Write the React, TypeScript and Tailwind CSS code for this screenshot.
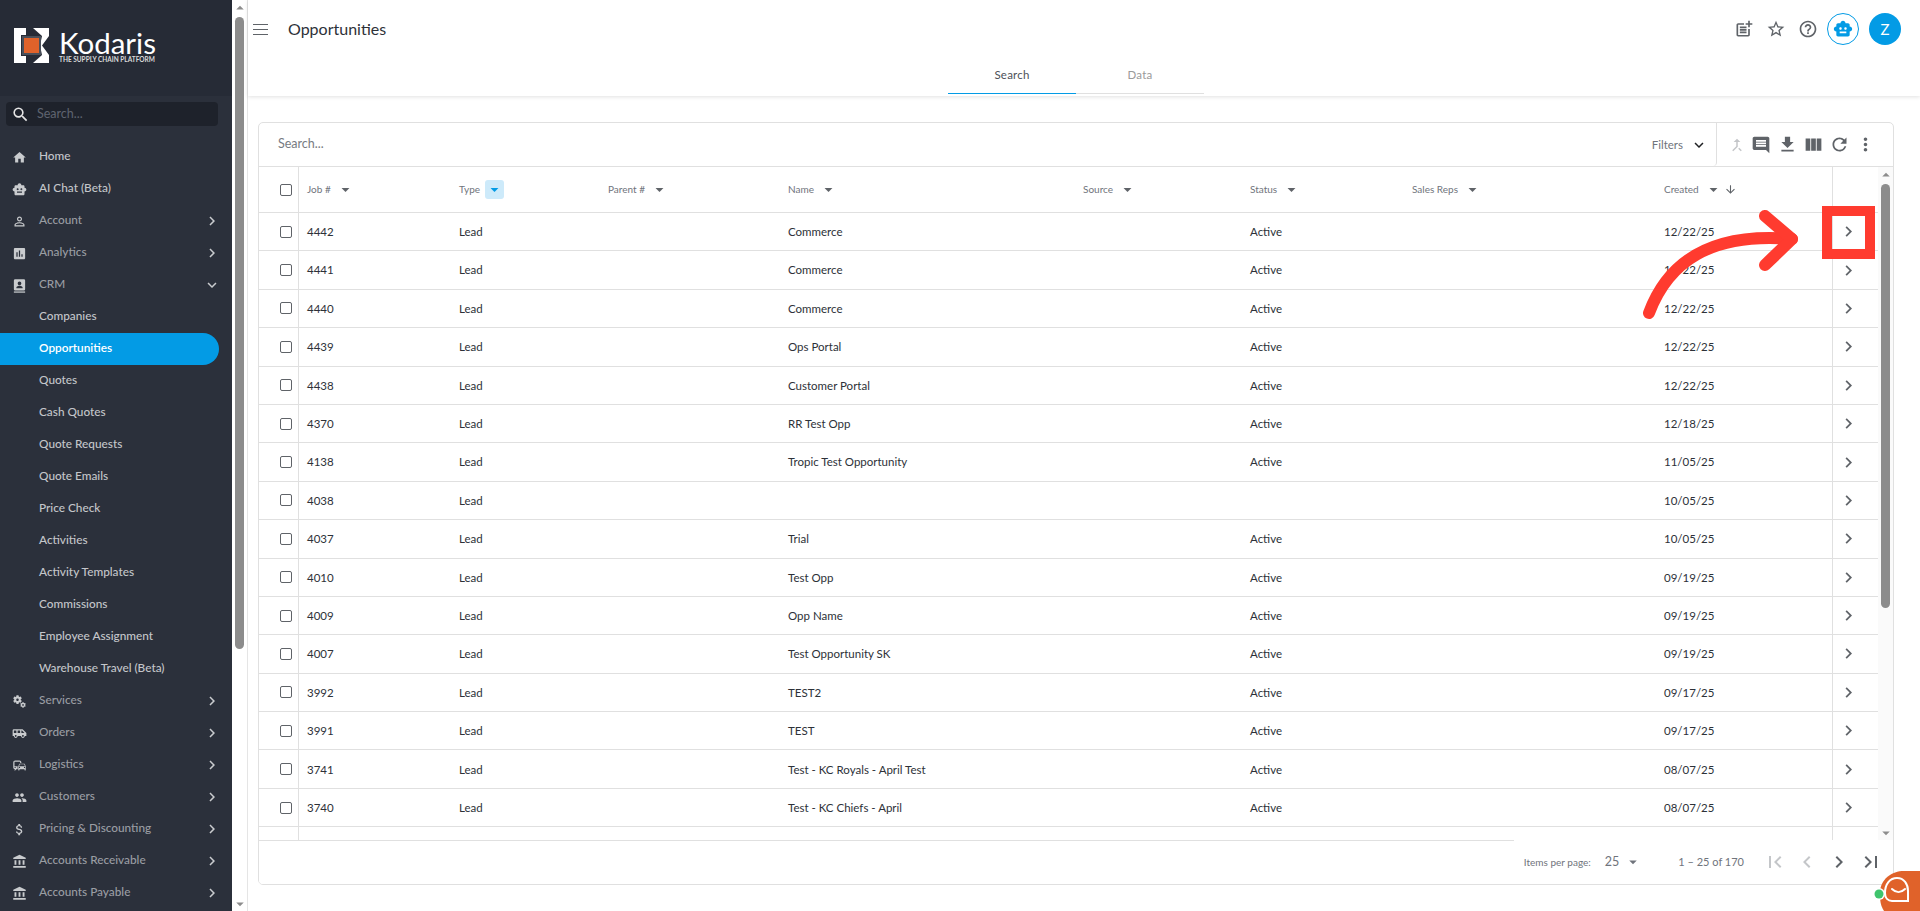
import React from "react";
import {
  MdHome, MdSmartToy, MdPermIdentity, MdAssessment, MdMiscellaneousServices, MdAirportShuttle,
  MdCommute, MdPeople, MdAttachMoney, MdAccountBalance, MdChevronRight, MdExpandMore, MdSearch, MdOutlinePostAdd,
  MdStarBorder, MdHelpOutline, MdCallMerge, MdInsertComment, MdFileDownload, MdViewColumn, MdRefresh, MdMoreVert,
  MdArrowDownward, MdFirstPage, MdChevronLeft, MdLastPage, MdArrowDropDown, MdArrowDropUp,
} from "react-icons/md";

const font = "[font-family:Lato,'Open_Sans',sans-serif]";

function CrmIcon({ className }: { className?: string }) {
  return (
    <svg className={className} viewBox="0 0 24 24" width="1em" height="1em" fill="currentColor">
      <path fillRule="evenodd" d="M5 2h14a2 2 0 0 1 2 2v14a2 2 0 0 1-2 2H5a2 2 0 0 1-2-2V4a2 2 0 0 1 2-2Zm7 3.5a3 3 0 1 0 0 6 3 3 0 0 0 0-6ZM7 16.5h10v-1.2c0-1.9-3.3-2.8-5-2.8s-5 .9-5 2.8v1.2Z" />
      <rect x="3" y="21.5" width="18" height="2" />
    </svg>
  );
}

type NavItem = { label: string; Icon?: React.ComponentType<{ className?: string }>; chevron?: "right" | "down"; sub?: boolean; active?: boolean };

const nav: NavItem[] = [
  { label: "Home", Icon: MdHome },
  { label: "AI Chat (Beta)", Icon: MdSmartToy },
  { label: "Account", Icon: MdPermIdentity, chevron: "right" },
  { label: "Analytics", Icon: MdAssessment, chevron: "right" },
  { label: "CRM", Icon: CrmIcon, chevron: "down" },
  { label: "Companies", sub: true },
  { label: "Opportunities", sub: true, active: true },
  { label: "Quotes", sub: true },
  { label: "Cash Quotes", sub: true },
  { label: "Quote Requests", sub: true },
  { label: "Quote Emails", sub: true },
  { label: "Price Check", sub: true },
  { label: "Activities", sub: true },
  { label: "Activity Templates", sub: true },
  { label: "Commissions", sub: true },
  { label: "Employee Assignment", sub: true },
  { label: "Warehouse Travel (Beta)", sub: true },
  { label: "Services", Icon: MdMiscellaneousServices, chevron: "right" },
  { label: "Orders", Icon: MdAirportShuttle, chevron: "right" },
  { label: "Logistics", Icon: MdCommute, chevron: "right" },
  { label: "Customers", Icon: MdPeople, chevron: "right" },
  { label: "Pricing & Discounting", Icon: MdAttachMoney, chevron: "right" },
  { label: "Accounts Receivable", Icon: MdAccountBalance, chevron: "right" },
  { label: "Accounts Payable", Icon: MdAccountBalance, chevron: "right" },
];

const rows: [string, string, string, string][] = [
  ["4442", "Commerce", "Active", "12/22/25"],
  ["4441", "Commerce", "Active", "12/22/25"],
  ["4440", "Commerce", "Active", "12/22/25"],
  ["4439", "Ops Portal", "Active", "12/22/25"],
  ["4438", "Customer Portal", "Active", "12/22/25"],
  ["4370", "RR Test Opp", "Active", "12/18/25"],
  ["4138", "Tropic Test Opportunity", "Active", "11/05/25"],
  ["4038", "", "", "10/05/25"],
  ["4037", "Trial", "Active", "10/05/25"],
  ["4010", "Test Opp", "Active", "09/19/25"],
  ["4009", "Opp Name", "Active", "09/19/25"],
  ["4007", "Test Opportunity SK", "Active", "09/19/25"],
  ["3992", "TEST2", "Active", "09/17/25"],
  ["3991", "TEST", "Active", "09/17/25"],
  ["3741", "Test - KC Royals - April Test", "Active", "08/07/25"],
  ["3740", "Test - KC Chiefs - April", "Active", "08/07/25"],
];

const grid = "grid grid-cols-[40px_152px_149px_180px_295px_167px_162px_252px_176px_46px]";

function Check() {
  return <span className="block w-[10px] h-[10px] box-content border-[1.5px] border-[#5f6368] rounded-[2px]" />;
}

function Logo() {
  return (
    <div className="flex items-start gap-[10px]">
      <svg width="35" height="35" viewBox="0 0 35 35" className="shrink-0">
        <path fill="#fff" d="M0 0h12v7H7v21h5v7H0z" />
        <path fill="#fff" d="M19 0h16v8l-7 9.5 7 9.500v8H19l9-8-2-9.500 2-9.500z" />
        <path fill="#4a4f59" d="M8 8h19v19H8z" />
        <rect x="10" y="10" width="15" height="15" fill="#e0622a" />
      </svg>
      <div className="flex flex-col items-start mt-[2px]">
        <span className={`${font} text-[29.5px] leading-[26px] text-white font-normal`}>Kodaris</span>
        <span className={`${font} text-[6.5px] leading-[7px] font-bold text-[#d9d9d9] whitespace-nowrap`}>THE SUPPLY CHAIN PLATFORM</span>
      </div>
    </div>
  );
}

function Sidebar() {
  return (
    <aside className="w-[232px] h-full shrink-0 bg-[#2b303b] flex flex-col overflow-hidden">
      <div className="h-[96px] bg-[#262b36] shrink-0 pl-[14px] pt-[28px]">
        <Logo />
      </div>
      <div className="h-[45px] shrink-0 px-[6px] pt-[6px]">
        <div className="h-[24px] w-[212px] bg-[#1e222b] rounded-[4px] flex items-center pl-[5px] gap-[7px]">
          <MdSearch className="text-[19px] text-[#e6e6e6]" />
          <span className={`${font} text-[12.5px] pt-[1px] text-[#5e6470]`}>Search...</span>
        </div>
      </div>
      <nav className="flex flex-col">
        {nav.map((n) => (
          <div
            key={n.label}
            className={`h-8 w-[219px] shrink-0 flex items-center pl-[12px] rounded-r-full ${font} text-[11.8px] font-medium ${n.active ? "bg-[#039be5] text-white font-semibold" : n.sub ? "text-[#c4c6ca]" : n.chevron ? "text-[#9a9da3]" : "text-[#c4c6ca]"}`}
          >
            <span className="w-[27px] shrink-0 flex items-center">
              {n.Icon && <n.Icon className="text-[15px] text-[#c9cbce]" />}
            </span>
            <span className="flex-1 whitespace-nowrap pb-[2px]">{n.label}</span>
            {n.chevron === "right" && <MdChevronRight className="text-[18px] text-[#c9cbce] -mr-[2px]" />}
            {n.chevron === "down" && <MdExpandMore className="text-[18px] text-[#c9cbce] -mr-[2px]" />}
          </div>
        ))}
      </nav>
    </aside>
  );
}

function Scrollbar({ thumb, className }: { thumb: string; className: string }) {
  return (
    <div className={`flex flex-col items-center ${className}`}>
      <MdArrowDropUp className="text-[18px] text-[#8c8c8c] shrink-0 -my-[2px]" />
      <div className="flex-1 w-full px-[3px] pt-[2px]">
        <div className={`${thumb} w-full bg-[#8c8c8c] rounded-full`} />
      </div>
      <MdArrowDropDown className="text-[18px] text-[#8c8c8c] shrink-0 -my-[2px]" />
    </div>
  );
}

function Th({ label, filtered }: { label: string; filtered?: boolean }) {
  return (
    <div className="h-full flex items-center pl-2 text-[10px] text-[#70747c]">
      <span>{label}</span>
      {filtered ? (
        <span className="ml-[5px] w-[19px] h-[19px] rounded-[3px] bg-[#cdeafa] flex items-center justify-center">
          <MdArrowDropDown className="text-[19px] text-[#039be5]" />
        </span>
      ) : (
        <MdArrowDropDown className="ml-[5px] text-[19px] text-[#5f6368]" />
      )}
      {label === "Created" && <MdArrowDownward className="ml-[1px] text-[13px] text-[#5f6368]" />}
    </div>
  );
}

function TopBar() {
  return (
    <header className="h-[96px] shrink-0 bg-white shadow-[0_1px_4px_rgba(0,0,0,0.12)] relative z-10">
      <div className="h-[58px] flex items-center pl-[6px] pr-[19px]">
        <svg width="15" height="11" viewBox="0 0 15 11" className="mr-[20px] ml-[-1px] shrink-0">
          <path d="M0 .5h15M0 5.500h15M0 10.500h15" stroke="#5f6368" strokeWidth="1" />
        </svg>
        <h1 className="text-[16px] text-[#2d3138] font-normal">Opportunities</h1>
        <div className="ml-auto flex items-center text-[#5f6368]">
          <MdOutlinePostAdd className="text-[20px] mr-[12px]" />
          <MdStarBorder className="text-[20px] mr-[12px]" />
          <MdHelpOutline className="text-[20px] mr-[9px]" />
          <span className="w-8 h-8 rounded-full border border-[#039be5] flex items-center justify-center mr-[10px]">
            <MdSmartToy className="text-[20px] text-[#039be5]" />
          </span>
          <span className="w-8 h-8 rounded-full bg-[#039be5] flex items-center justify-center text-white text-[15px]">Z</span>
        </div>
      </div>
      <div className="flex justify-center pr-4 -mt-[2px]">
        <div className="flex text-[11.5px] tracking-[0.2px]">
          <div className="w-32 h-[38px] flex items-center justify-center border-b border-[#039be5] text-[#4d5158]">Search</div>
          <div className="w-32 h-[38px] flex items-center justify-center border-b border-[#e0e0e0] text-[#9a9a9a]">Data</div>
        </div>
      </div>
    </header>
  );
}

function ToolIcon({ children }: { children: React.ReactNode }) {
  return <span className="w-[26px] flex items-center justify-center">{children}</span>;
}

function Table() {
  return (
    <section className="h-[763px] border border-[#e0e0e0] rounded-[5px] flex flex-col overflow-hidden bg-white">
      <div className="h-[44px] shrink-0 flex items-center border-b border-[#e0e0e0]">
        <span className="pl-[19px] text-[12.5px] text-[#777b82]">Search...</span>
        <div className="ml-auto h-full w-[176px] border-r border-[#e0e0e0] flex items-center justify-end pr-[8px] text-[#70747c] text-[11.5px] rounded-br-[4px]">
          Filters
          <MdExpandMore className="ml-[7px] text-[18px] text-[#202124]" />
        </div>
        <div className="w-[176px] flex items-center pl-[5px] text-[#5f6368]">
          <ToolIcon><MdCallMerge className="text-[18px] text-[#c4c6c9] ml-[4px]" /></ToolIcon>
          <ToolIcon><MdInsertComment className="text-[20px]" /></ToolIcon>
          <ToolIcon><MdFileDownload className="text-[21px]" /></ToolIcon>
          <ToolIcon><MdViewColumn className="text-[21px]" /></ToolIcon>
          <ToolIcon><MdRefresh className="text-[21px]" /></ToolIcon>
          <ToolIcon><MdMoreVert className="text-[21px]" /></ToolIcon>
        </div>
      </div>
      <div className="flex-1 flex min-h-0">
        <div className="w-[1619px] shrink-0 flex flex-col overflow-hidden">
          <div className={`${grid} h-[46px] shrink-0 border-b border-[#e0e0e0]`}>
            <div className="flex items-center justify-end pr-[6px] border-r border-[#e0e0e0]"><Check /></div>
            <Th label="Job #" />
            <Th label="Type" filtered />
            <Th label="Parent #" />
            <Th label="Name" />
            <Th label="Source" />
            <Th label="Status" />
            <Th label="Sales Reps" />
            <Th label="Created" />
            <div className="border-l border-[#e0e0e0]" />
          </div>
          {rows.map((r) => (
            <div key={r[0]} className={`${grid} h-[38.4px] shrink-0 border-b border-[#e0e0e0] items-stretch text-[11.5px] text-[#2d3138]`}>
              <div className="flex items-center justify-end pr-[6px] border-r border-[#e0e0e0]"><Check /></div>
              <div className="flex items-center pl-2">{r[0]}</div>
              <div className="flex items-center pl-2">Lead</div>
              <div />
              <div className="flex items-center pl-2">{r[1]}</div>
              <div />
              <div className="flex items-center pl-2">{r[2]}</div>
              <div />
              <div className="flex items-center pl-2">{r[3]}</div>
              <div className="flex items-center pl-[5px] border-l border-[#e0e0e0] text-[#5f6368]"><MdChevronRight className="text-[21px]" /></div>
            </div>
          ))}
          <div className={`${grid} h-[38.4px] shrink-0`}>
            <div className="border-r border-[#e0e0e0]" />
            <div /><div /><div /><div /><div /><div /><div /><div />
            <div className="border-l border-[#e0e0e0]" />
          </div>
        </div>
        <Scrollbar thumb="h-[424px]" className="w-[15px] bg-[#fafafa] pt-[1px]" />
      </div>
      <div className="h-[44px] shrink-0 bg-white flex items-center text-[#70747c] pr-[10px]">
        <div className="w-[1255px] self-start border-t border-[#e0e0e0] mr-auto" />
        <span className="text-[10px] mr-[14px]">Items per page:</span>
        <span className="text-[12.5px] mr-[5px]">25</span>
        <MdArrowDropDown className="text-[18px] mr-[36px]" />
        <span className="text-[11px] mr-[19px]">1 – 25 of 170</span>
        <MdFirstPage className="text-[24px] text-[#c4c6c9] mr-[8px]" />
        <MdChevronLeft className="text-[24px] text-[#c4c6c9] mr-[8px]" />
        <MdChevronRight className="text-[24px] text-[#5f6368] mr-[8px]" />
        <MdLastPage className="text-[24px] text-[#5f6368]" />
      </div>
    </section>
  );
}

function Annotation() {
  return (
    <svg className="absolute left-[1640px] top-[200px] pointer-events-none" width="240" height="120" viewBox="1640 200 240 120">
      <rect x="1827" y="211" width="43" height="43" fill="none" stroke="#ff3b2f" strokeWidth="10" />
      <path d="M1649 313C1668 262 1710 232 1792 239" fill="none" stroke="#ff3b2f" strokeWidth="12" strokeLinecap="round" />
      <path d="M1765 216L1792 239L1765 265" fill="none" stroke="#ff3b2f" strokeWidth="12" strokeLinecap="round" strokeLinejoin="round" />
    </svg>
  );
}

function ChatBadge() {
  return (
    <svg className="absolute left-[1872px] top-[869px]" width="48" height="42" viewBox="0 0 48 42">
      <path d="M12 42C8 36 8 30 8 24C8 10 20 2 32 2H48V42Z" fill="#e0622a" />
      <circle cx="7" cy="25" r="6" fill="#fff" />
      <circle cx="7" cy="25" r="4.500" fill="#3fc46d" />
      <path d="M13 24C13 15 18 9 25 9C32 9 36 15 36 22V32H20C16 32 13 29 13 24Z" fill="#e0622a" stroke="#fff" strokeWidth="2" />
      <path d="M20 20C24 24 29 24 33 20" fill="none" stroke="#fff" strokeWidth="2" strokeLinecap="round" />
    </svg>
  );
}

export default function App() {
  return (
    <div className={`relative h-[911px] w-[1920px] flex overflow-hidden bg-white ${font}`}>
      <Sidebar />
      <Scrollbar thumb="h-[632px]" className="w-[15px] h-full bg-white pt-[1px]" />
      <main className="flex-1 min-w-0 h-full border-l border-[#e5e5e5] flex flex-col bg-white">
        <TopBar />
        <div className="flex-1 min-h-0 pt-[26px] pl-[10px] pr-[26px]">
          <Table />
        </div>
      </main>
      <Annotation />
      <ChatBadge />
    </div>
  );
}
